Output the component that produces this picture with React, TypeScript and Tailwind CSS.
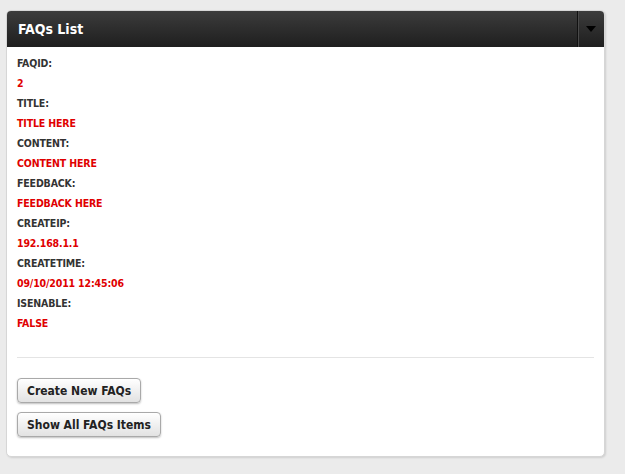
const FIELDS: [string, string][] = [
  ['FAQID:', '2'],
  ['TITLE:', 'TITLE HERE'],
  ['CONTENT:', 'CONTENT HERE'],
  ['FEEDBACK:', 'FEEDBACK HERE'],
  ['CREATEIP:', '192.168.1.1'],
  ['CREATETIME:', '09/10/2011 12:45:06'],
  ['ISENABLE:', 'FALSE'],
]

function Btn({ children }: { children: string }) {
  return (
    <button className="flex h-[25px] items-center rounded-[4px] border border-[#a9a9a9] bg-gradient-to-b from-white to-[#e2e2e2] px-[9px] text-[12px] font-bold text-[#222] shadow-[0_1px_2px_rgba(0,0,0,0.25)]">
      {children}
    </button>
  )
}

export default function App() {
  return (
    <div
      className="h-[474px] w-[625px] overflow-hidden bg-[#ebebeb] pl-[6px] pt-[10px]"
      style={{ fontFamily: 'Tahoma, "DejaVu Sans Condensed", "DejaVu Sans", sans-serif' }}
    >
      <div className="h-[447px] w-[599px] rounded-[5px] border border-[#d6d6d6] bg-white shadow-[1px_1px_2px_rgba(0,0,0,0.12)]">
        <div className="flex h-[36px] items-stretch rounded-t-[4px] bg-gradient-to-b from-[#3c3c3c] to-[#1f1f1f]">
          <div className="flex flex-1 items-center pl-[11px] text-[14px] font-bold text-white">FAQs List</div>
          <div className="flex w-[27px] items-center justify-center border-l border-[#111] shadow-[inset_1px_0_0_#4a4a4a]">
            <svg width="10" height="6" viewBox="0 0 10 6">
              <path d="M0 0h10L5 6z" fill="#000" />
            </svg>
          </div>
        </div>
        <div className="px-[10px] pt-[7px]">
          {FIELDS.map(([label, value]) => (
            <div key={label}>
              <div className="flex h-[20px] items-center text-[10.5px] font-bold tracking-[-0.15px] text-[#333]">{label}</div>
              <div className="flex h-[20px] items-center text-[10.5px] font-bold tracking-[-0.15px] text-[#e00000]">{value}</div>
            </div>
          ))}
          <div className="mt-[23px] h-px bg-[#e4e4e4]" />
          <div className="mt-[20px] flex flex-col items-start gap-[9px]">
            <Btn>Create New FAQs</Btn>
            <Btn>Show All FAQs Items</Btn>
          </div>
        </div>
      </div>
    </div>
  )
}
